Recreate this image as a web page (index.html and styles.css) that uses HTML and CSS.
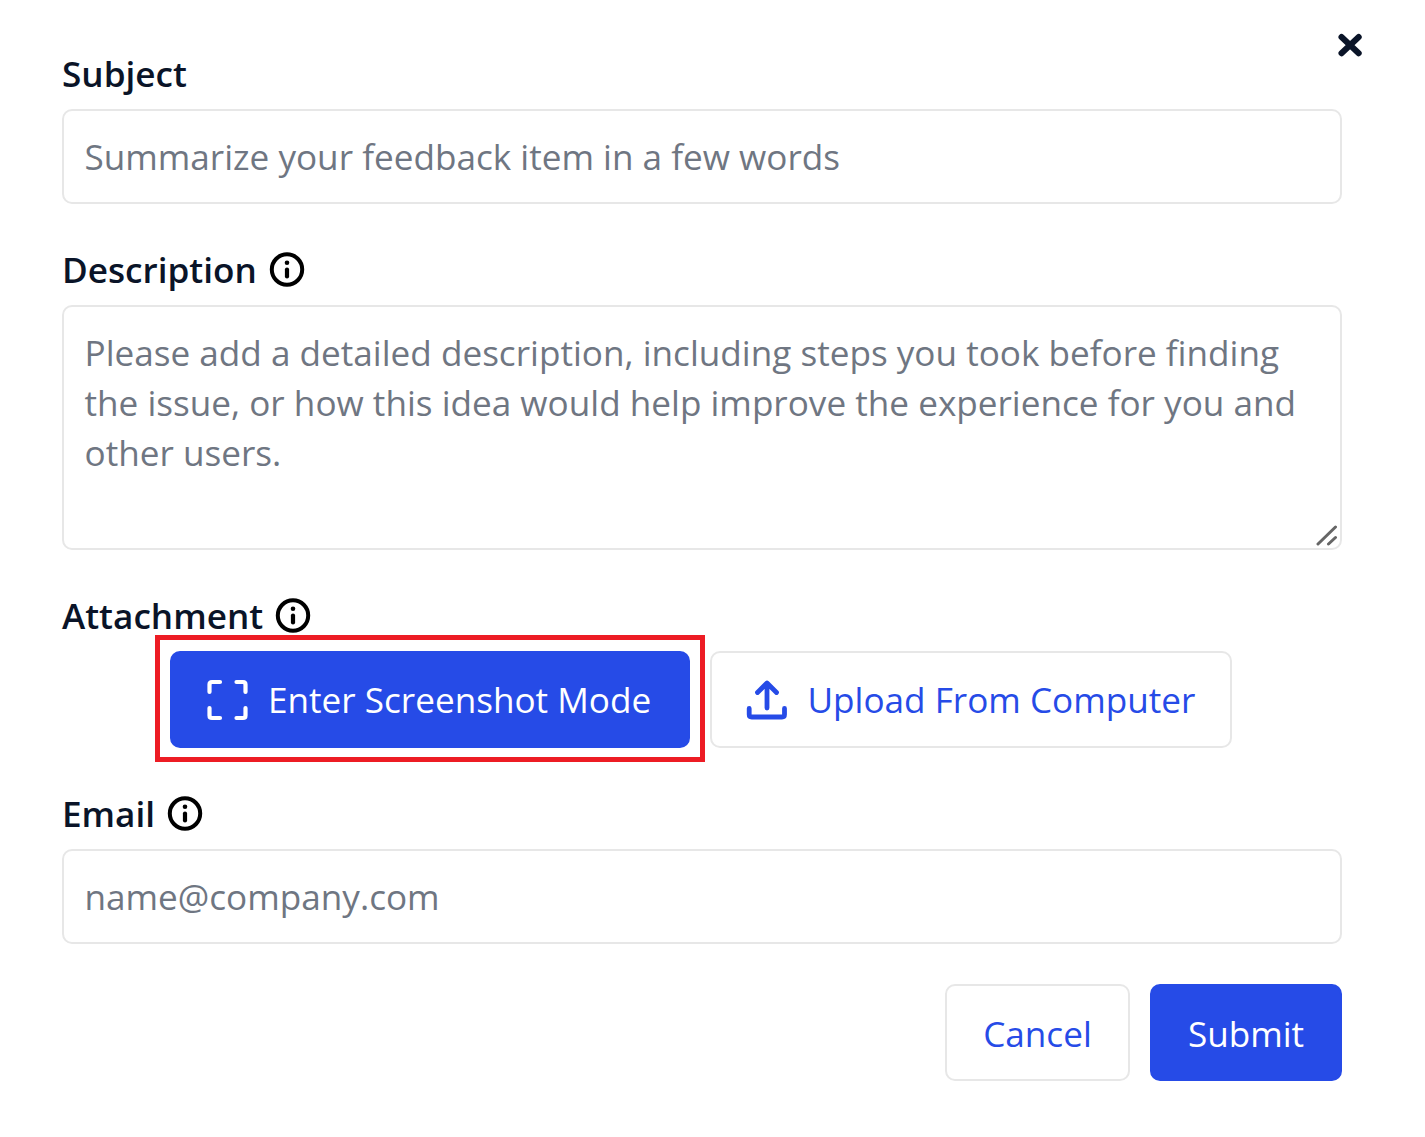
FILE: index.html
```html
<!DOCTYPE html>
<html lang="en">
<head>
<meta charset="utf-8">
<title>Feedback</title>
<link rel="stylesheet" href="styles.css">
</head>
<body>
<svg class="sprite" aria-hidden="true">
  <symbol id="info" viewBox="0 0 36 36">
    <circle cx="18" cy="17.500" r="15.2" fill="none" stroke="#000" stroke-width="4"/>
    <circle cx="18" cy="10.700" r="2.3"/>
    <path d="M18 17.500v7" stroke="#000" stroke-width="4.200" stroke-linecap="round"/>
  </symbol>
</svg>
<form class="dialog">
  <button class="close" type="button" aria-label="Close">
    <svg width="26" height="26" viewBox="0 0 26 26"><path d="M4.500 5 21.700 21.300M21.700 5 4.500 21.300" stroke="#0a1428" stroke-width="6" stroke-linecap="round"/></svg>
  </button>

  <div class="field">
    <label class="label" for="subject"><span>Subject</span></label>
    <input class="control" id="subject" type="text" placeholder="Summarize your feedback item in a few words">
  </div>

  <div class="field">
    <label class="label" for="description"><span>Description</span> <svg class="info"><use href="#info"/></svg></label>
    <div class="area">
      <textarea class="control multiline" id="description" placeholder="Please add a detailed description, including steps you took before finding the issue, or how this idea would help improve the experience for you and other users."></textarea>
      <svg class="grip" width="22" height="22" viewBox="0 0 22 22"><path d="M2 19 19.500 2M12.500 19l7-6.500" stroke="#666" stroke-width="3" stroke-linecap="round"/></svg>
    </div>
  </div>

  <div class="field attachment">
    <div class="label"><span>Attachment</span> <svg class="info"><use href="#info"/></svg></div>
    <div class="choices">
      <button class="button primary capture" type="button">
        <svg class="icon" width="42" height="42" viewBox="0 0 42 42"><path d="M3.500 13V5.500Q3.500 3 6 3H14M30.500 3h6.500Q39.500 3 39.500 5.500V13M39.500 29v7.500Q39.500 39 37 39H30.500M14 39H6Q3.500 39 3.500 36.500V29" fill="none" stroke="currentColor" stroke-width="4.200" stroke-linecap="round"/></svg>
        <span>Enter Screenshot Mode</span>
      </button>
      <button class="button outline upload" type="button">
        <svg class="icon" width="42" height="42" viewBox="0 0 42 42"><path d="M21 29V4.500M11.500 13.500l9.500-9.500 9.500 9.500M3.200 29.500v6Q3.200 38 5.700 38h30.300q2.500 0 2.500-2.500v-6" fill="none" stroke="currentColor" stroke-width="4.800" stroke-linecap="round" stroke-linejoin="round"/></svg>
        <span>Upload From Computer</span>
      </button>
    </div>
  </div>

  <div class="field">
    <label class="label" for="email"><span>Email</span> <svg class="info"><use href="#info"/></svg></label>
    <input class="control" id="email" type="text" placeholder="name@company.com">
  </div>

  <div class="actions">
    <button class="button outline cancel" type="button">Cancel</button>
    <button class="button primary submit" type="button">Submit</button>
  </div>
</form>
</body>
</html>
```
FILE: styles.css
```css
* { box-sizing: border-box; }

body {
  margin: 0;
  background: #fff;
  color: #0a1428;
  font: 400 35.14px/50px "Open Sans", sans-serif;
}

.sprite { position: absolute; width: 0; height: 0; }

.dialog {
  position: relative;
  width: 1425px;
  height: 1137px;
  padding: 49px 83px 0 62px;
}

.close {
  position: absolute;
  top: 32px;
  right: 62px;
  width: 26px;
  height: 26px;
  padding: 0;
  border: 0;
  background: none;
}

.close svg { display: block; }

.field { margin-bottom: 41px; }

.label {
  display: flex;
  align-items: center;
  height: 50px;
  margin-bottom: 10px;
  gap: 12px;
  font-weight: 600;
}

.label span { padding-bottom: 3px; }

.info { width: 36px; height: 36px; }

.control {
  display: block;
  width: 100%;
  height: 95px;
  padding: 0 20.500px 2px;
  border: 2px solid #e7e7e7;
  border-radius: 10px;
  outline: 0;
  background: #fff;
  font: inherit;
  resize: none;
}

.control::placeholder { color: #6f7682; opacity: 1; }

.area { position: relative; }

.multiline {
  height: 245px;
  padding-top: 20px;
  overflow: hidden;
  line-height: 50.2px;
}

.grip { position: absolute; right: 4px; bottom: 3px; }

.choices {
  display: flex;
  gap: 20px;
  padding-left: 108px;
}

.button {
  display: flex;
  align-items: center;
  justify-content: center;
  height: 97px;
  padding: 0;
  border: 2px solid transparent;
  border-radius: 10px;
  font: inherit;
  white-space: nowrap;
}

.primary { background: #264be7; border-color: #264be7; color: #fff; }
.outline { background: #fff; border-color: #e7e7e7; color: #264be7; }

.capture, .upload { justify-content: flex-start; padding-left: 34px; gap: 20px; }

.icon { margin-top: 1px; }
.icon + span { padding-bottom: 1px; }

.capture { position: relative; width: 520px; }

.capture::after {
  content: "";
  position: absolute;
  inset: -18px -17px -16px;
  border: 5px solid #ed1c24;
}

.upload { width: 522px; padding-left: 33.500px; }

.actions { display: flex; justify-content: flex-end; gap: 20px; margin-top: -1px; }
.cancel { width: 185px; }
.submit { width: 192px; }
```
